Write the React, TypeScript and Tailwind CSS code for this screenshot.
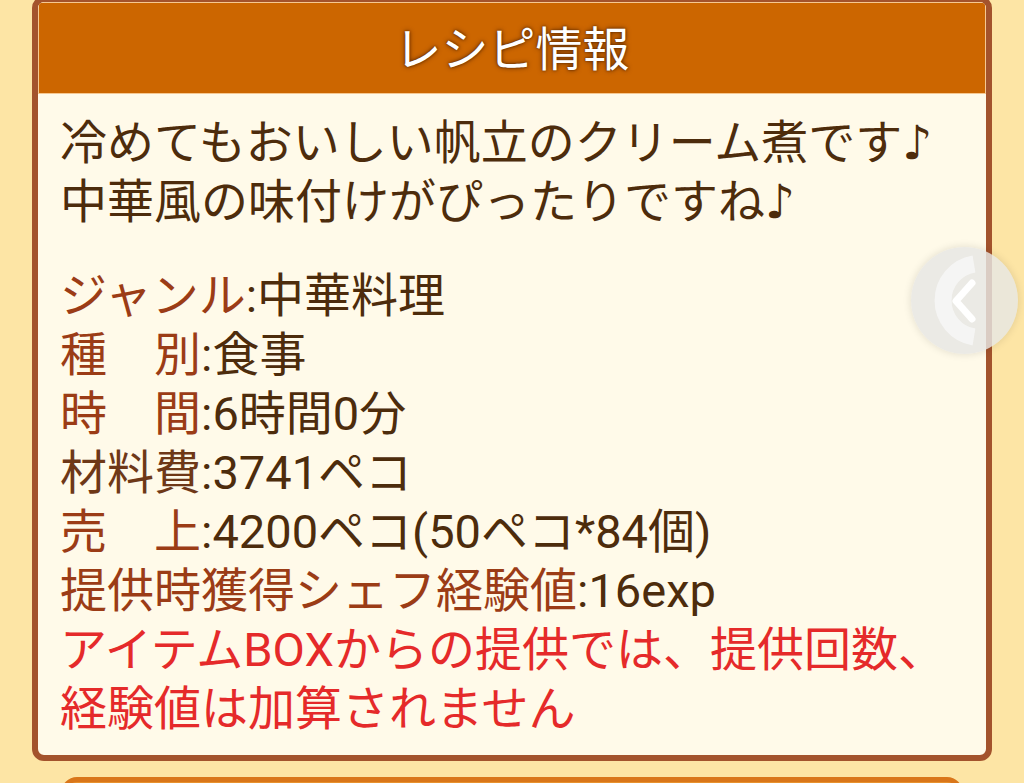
import { ReactNode } from "react";

const font = "font-['Roboto','Noto_Sans_CJK_JP',sans-serif]";

function Note() {
  return <span className="font-['DejaVu_Sans',sans-serif]">♪</span>;
}

function Row({ label, value, labelClass = "text-[#9b3c16]" }: { label: string; value: ReactNode; labelClass?: string }) {
  return (
    <p className="whitespace-nowrap">
      <span className={labelClass}>{label}</span>
      <span className="text-[#4d2c0c]">:{value}</span>
    </p>
  );
}

function SideArrow() {
  return (
    <div className="absolute left-[911px] top-[247px] h-[107px] w-[107px] rounded-full bg-[rgba(230,230,228,0.82)] shadow-[0_0_8px_rgba(0,0,0,0.12)]">
      <svg viewBox="0 0 107 107" className="h-full w-full">
        <path d="M63 17 A37 37 0 0 0 63 90" fill="none" stroke="rgba(246,246,244,0.95)" strokeWidth="17" />
        <path d="M61 36 L45 54 L61 72" fill="none" stroke="#ffffff" strokeWidth="7" strokeLinecap="round" strokeLinejoin="round" />
      </svg>
    </div>
  );
}

export default function App() {
  return (
    <div className={`relative h-[783px] w-full overflow-hidden bg-[#fde5a5] ${font}`}>
      <div className="mx-[32px] mt-[-4px] overflow-hidden rounded-[12px] border-[6px] border-[#a3532c] bg-[#fffae9]">
        <div className="border-[1px] border-[#f6c891]">
          <div className="flex h-[90px] items-center justify-center bg-[#cc6600] pt-[5px] text-[47px] text-white [text-shadow:0_0_5px_#5a2800,0_0_2px_#5a2800]">
            レシピ情報
          </div>
        </div>
        <div className="px-[22px] pb-[17px] pt-[19px] text-[47px] leading-[59px] text-[#4d2c0c]">
          <p className="whitespace-nowrap">
            冷めてもおいしい帆立のクリーム煮です<Note />
            <br />
            中華風の味付けがぴったりですね<Note />
          </p>
          <div className="mt-[35px]">
            <Row label="ジャンル" value="中華料理" />
            <Row label="種　別" value="食事" />
            <Row label="時　間" value="6時間0分" />
            <Row label="材料費" value="3741ペコ" labelClass="text-[#6e3817]" />
            <Row label="売　上" value="4200ペコ(50ペコ*84個)" />
            <Row label="提供時獲得シェフ経験値" value="16exp" />
            <p className="whitespace-nowrap text-[#e52a2a]">
              アイテムBOXからの提供では、提供回数、
              <br />
              経験値は加算されません
            </p>
          </div>
        </div>
      </div>
      <div className="mx-[61px] mt-[16px] h-[40px] rounded-[16px] border-[5px] border-[#d9761a] bg-[#e8922e]" />
      <SideArrow />
    </div>
  );
}
